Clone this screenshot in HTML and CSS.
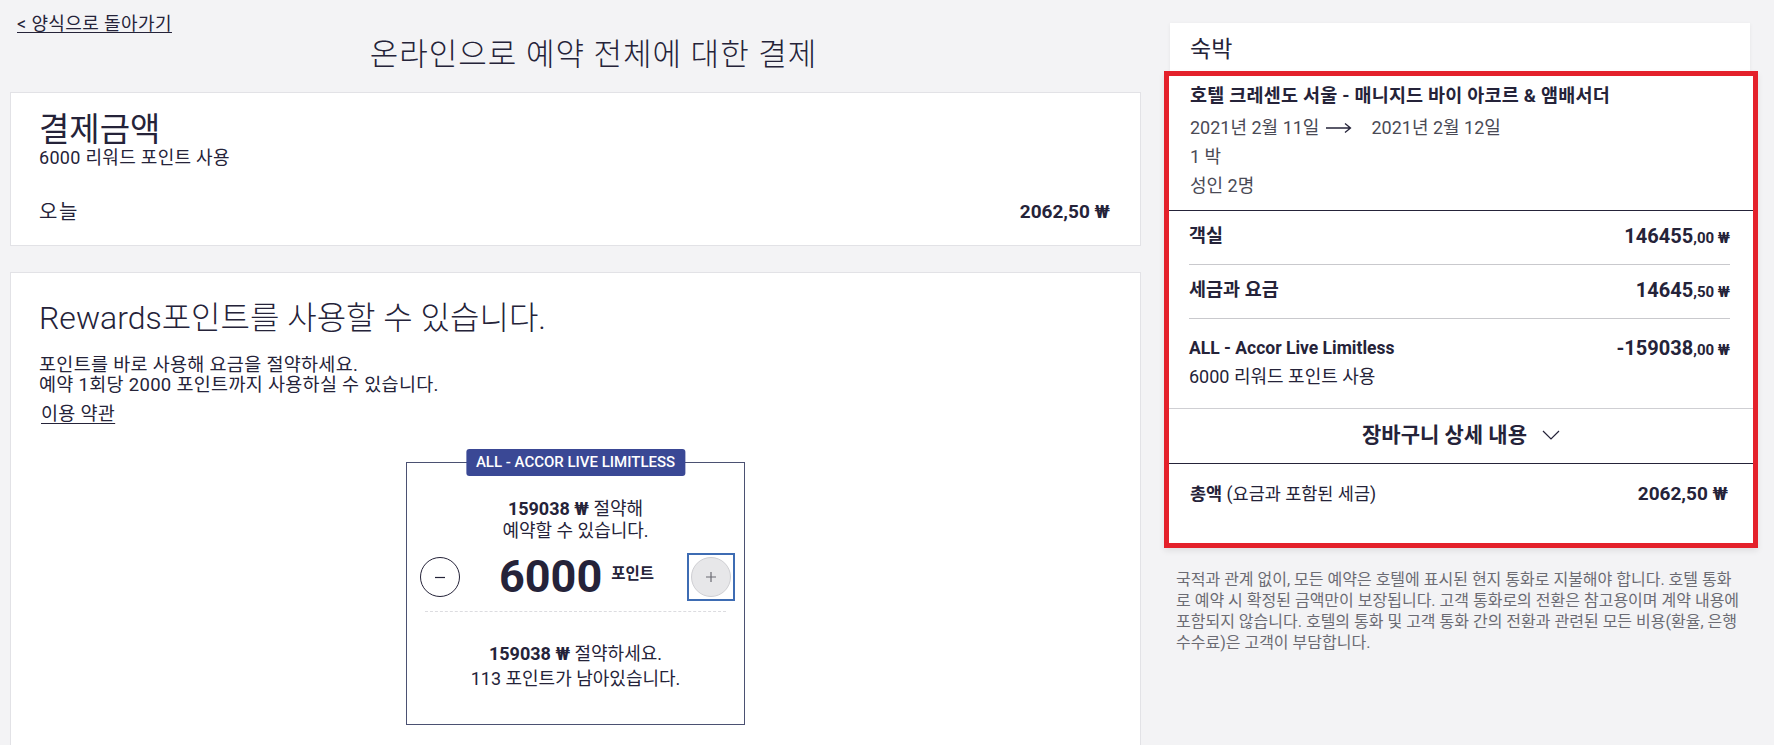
FILE: index.html
```html
<!DOCTYPE html>
<html lang="ko">
<head>
<meta charset="utf-8">
<title>온라인으로 예약 전체에 대한 결제</title>
<link rel="stylesheet" href="styles.css">
</head>
<body>
<div class="page">
  <main class="main">
    <a class="back" href="#">&lt; 양식으로 돌아가기</a>
    <h1 class="page-title">온라인으로 예약 전체에 대한 결제</h1>

    <section class="card pay">
      <h2 class="pay-title">결제금액</h2>
      <div class="pay-sub">6000 리워드 포인트 사용</div>
      <div class="pay-row"><span class="today">오늘</span><strong class="pay-amount">2062,50 ₩</strong></div>
    </section>

    <section class="card rewards">
      <h2 class="rewards-title">Rewards포인트를 사용할 수 있습니다.</h2>
      <p class="rewards-text">포인트를 바로 사용해 요금을 절약하세요.<br>예약 1회당 2000 포인트까지 사용하실 수 있습니다.</p>
      <a class="terms" href="#">이용 약관</a>

      <div class="points-box">
        <div class="badge">ALL - ACCOR LIVE LIMITLESS</div>
        <p class="save"><strong>159038 ₩</strong> 절약해<br>예약할 수 있습니다.</p>
        <div class="stepper">
          <button class="step minus" aria-label="minus">
            <svg width="12" height="12" viewBox="0 0 12 12"><path d="M1 6.5H11" stroke="#252339" stroke-width="1.2"/></svg>
          </button>
          <div class="amount"><span class="num">6000</span><span class="unit">포인트</span></div>
          <div class="focus">
            <button class="step plus" aria-label="plus">
              <svg width="12" height="12" viewBox="0 0 12 12"><path d="M1 6H11M6 1V11" stroke="#6a6a72" stroke-width="1.2"/></svg>
            </button>
          </div>
        </div>
        <hr class="dash">
        <p class="remain"><strong>159038 ₩</strong> 절약하세요.<br>113 포인트가 남아있습니다.</p>
      </div>
    </section>
  </main>

  <aside class="side">
    <div class="stay-head">숙박</div>
    <div class="stay">
      <div class="stay-info">
        <div class="hotel">호텔 크레센도 서울 - 매니지드 바이 아코르 &amp; 앰배서더</div>
        <div class="dates">
          <span>2021년 2월 11일</span>
          <svg class="arrow" width="26" height="12" viewBox="0 0 26 12"><path d="M0 6H24.5M19 1.5L24.5 6L19 10.5" fill="none" stroke="#252339" stroke-width="1.3"/></svg>
          <span>2021년 2월 12일</span>
        </div>
        <div class="info-line">1 박</div>
        <div class="info-line">성인 2명</div>
      </div>
      <div class="items">
        <div class="item">
          <span class="label">객실</span>
          <span class="price">146455<span class="cents">,00 ₩</span></span>
        </div>
        <div class="item">
          <span class="label">세금과 요금</span>
          <span class="price">14645<span class="cents">,50 ₩</span></span>
        </div>
        <div class="item last">
          <div>
            <div>ALL - Accor Live Limitless</div>
            <div class="item-sub">6000 리워드 포인트 사용</div>
          </div>
          <span class="price">-159038<span class="cents">,00 ₩</span></span>
        </div>
      </div>
      <div class="basket">
        <span>장바구니 상세 내용</span>
        <svg width="18" height="10" viewBox="0 0 18 10"><path d="M1 1L9 9L17 1" fill="none" stroke="#252339" stroke-width="1.2"/></svg>
      </div>
      <div class="total">
        <span><strong>총액</strong> (요금과 포함된 세금)</span>
        <strong class="total-amount">2062,50 ₩</strong>
      </div>
    </div>
    <p class="note">국적과 관계 없이, 모든 예약은 호텔에 표시된 현지 통화로 지불해야 합니다. 호텔 통화<br>로 예약 시 확정된 금액만이 보장됩니다. 고객 통화로의 전환은 참고용이며 계약 내용에<br>포함되지 않습니다. 호텔의 통화 및 고객 통화 간의 전환과 관련된 모든 비용(환율, 은행<br>수수료)은 고객이 부담합니다.</p>
  </aside>
</div>
</body>
</html>
```

FILE: styles.css
```css
* {
  box-sizing: border-box;
}

html, body {
  margin: 0;
  background: #f3f3f5;
  color: #252339;
  font-family: Roboto, "Noto Sans CJK KR", "Noto Sans", sans-serif;
}

body {
  overflow: hidden;
}

.page {
  display: flex;
  align-items: flex-start;
  gap: 23px;
  padding-left: 10px;
}

/* ---------- left column ---------- */
.main {
  width: 1131px;
  flex: none;
}

.back {
  display: block;
  width: max-content;
  margin: 14px 0 0 7px;
  font-size: 18px;
  line-height: 20px;
  letter-spacing: 0.4px;
  color: #252339;
  text-decoration: underline;
  text-underline-offset: 2px;
}

.page-title {
  margin: 4px 0 0;
  padding-left: 36px;
  text-align: center;
  font-size: 31px;
  line-height: 34px;
  letter-spacing: 1px;
  font-weight: 300;
}

.card {
  background: #fff;
  border: 1px solid #e2e2e6;
}

.pay {
  margin-top: 20px;
  padding: 19px 30px 21px 28px;
}

.pay-title {
  margin: 0;
  font-size: 33px;
  line-height: 36px;
  font-weight: 400;
}

.pay-sub {
  font-size: 18px;
  line-height: 20px;
  letter-spacing: 0.3px;
}

.pay-row {
  display: flex;
  justify-content: space-between;
  align-items: center;
  margin-top: 32px;
  font-size: 17px;
  line-height: 24px;
}

.today {
  font-size: 20px;
  letter-spacing: 1.5px;
}

.pay-amount {
  font-size: 19px;
  font-weight: 700;
}

.rewards {
  margin-top: 26px;
  padding: 27px 28px 60px;
}

.rewards-title {
  margin: 0;
  font-size: 32px;
  line-height: 36px;
  font-weight: 300;
}

.rewards-text {
  margin: 19px 0 0;
  font-size: 18.5px;
  line-height: 20px;
  letter-spacing: 0.3px;
}

.terms {
  display: block;
  width: max-content;
  margin-top: 9px;
  margin-left: 2px;
  font-size: 18.5px;
  line-height: 20px;
  letter-spacing: 0.3px;
  color: #252339;
  text-decoration: underline;
  text-underline-offset: 3px;
}

.points-box {
  position: relative;
  width: 339px;
  margin: 38px auto 0;
  padding: 35px 0 33px;
  border: 1px solid #4b5172;
  text-align: center;
}

.badge {
  position: absolute;
  top: -14px;
  left: 50%;
  transform: translateX(-50%);
  height: 27px;
  padding: 0 10px;
  background: #3a4895;
  color: #fff;
  border-radius: 3px;
  font-size: 15px;
  font-weight: 500;
  line-height: 27px;
  white-space: nowrap;
}

.save {
  margin: 0;
  font-size: 18px;
  line-height: 22px;
}

.stepper {
  display: flex;
  justify-content: space-between;
  align-items: center;
  height: 48px;
  margin-top: 11px;
  padding: 0 9px 0 13px;
}

.step {
  display: flex;
  align-items: center;
  justify-content: center;
  width: 40px;
  height: 40px;
  padding: 0;
  border-radius: 50%;
  cursor: pointer;
}

.minus {
  background: #fff;
  border: 1px solid #252339;
}

.plus {
  background: #e7e7e9;
  border: 1px solid #cfcfd3;
}

.focus {
  display: flex;
  align-items: center;
  justify-content: center;
  width: 48px;
  height: 48px;
  border: 2px solid #3e6cb3;
}

.amount {
  display: flex;
  align-items: flex-start;
  padding-left: 6px;
}

.num {
  font-size: 45px;
  line-height: 48px;
  font-weight: 700;
}

.unit {
  margin: 13px 0 0 9px;
  font-size: 15.5px;
  line-height: 16px;
  font-weight: 700;
}

.dash {
  margin: 10px 18px 0;
  border: 0;
  border-top: 1px dashed #dcdce0;
}

.remain {
  margin: 29px 0 0;
  font-size: 18px;
  line-height: 25px;
}

/* ---------- right column ---------- */
.side {
  width: 594px;
  flex: none;
  margin-top: 23px;
}

.stay-head {
  margin: 0 8px 0 6px;
  padding: 12px 20px 6px;
  background: #fff;
  font-size: 23px;
  line-height: 30px;
  box-shadow: 0 1px 4px rgba(0, 0, 0, 0.06);
}

.stay {
  background: #fff;
  border: 5px solid #e4212b;
  box-shadow: 0 3px 6px rgba(0, 0, 0, 0.08);
}

.stay-info {
  padding: 8px 20px 10px 21px;
  border-bottom: 1px solid #252339;
}

.hotel {
  font-size: 18.5px;
  line-height: 24px;
  letter-spacing: 0.2px;
  font-weight: 700;
}

.dates {
  display: flex;
  align-items: center;
  margin-top: 5px;
  font-size: 18px;
  line-height: 29px;
  color: #4a4a55;
}

.arrow {
  margin: 0 19px 0 7px;
}

.info-line {
  font-size: 18px;
  line-height: 29px;
  color: #4a4a55;
}

.items {
  padding: 0 23px 0 20px;
}

.item {
  display: flex;
  justify-content: space-between;
  align-items: flex-start;
  padding: 13px 0 16px;
  border-bottom: 1px solid #c9c9cd;
  font-size: 17.5px;
  line-height: 24px;
  font-weight: 700;
}

.item.last {
  padding: 17px 0 19px;
  border-bottom: 0;
}

.label {
  font-size: 18.5px;
}

.item-sub {
  margin-top: 5px;
  font-size: 18px;
  font-weight: 400;
}

.price {
  font-size: 20px;
  font-weight: 700;
}

.cents {
  font-size: 15px;
  line-height: 1;
}

.basket {
  display: flex;
  justify-content: center;
  align-items: center;
  gap: 15px;
  height: 56px;
  padding-bottom: 6px;
  border-top: 1px solid #cfcfd3;
  border-bottom: 1px solid #252339;
  font-size: 21px;
  font-weight: 700;
}

.basket svg {
  margin-top: 4px;
}

.total {
  display: flex;
  justify-content: space-between;
  align-items: center;
  padding: 18px 25px 37px 21px;
  font-size: 17.5px;
  line-height: 24px;
}

.total-amount {
  font-size: 19px;
  font-weight: 700;
}

.note {
  margin: 21px 0 0;
  padding-left: 12px;
  font-size: 16px;
  line-height: 21px;
  color: #6b6b73;
  white-space: nowrap;
}
```
